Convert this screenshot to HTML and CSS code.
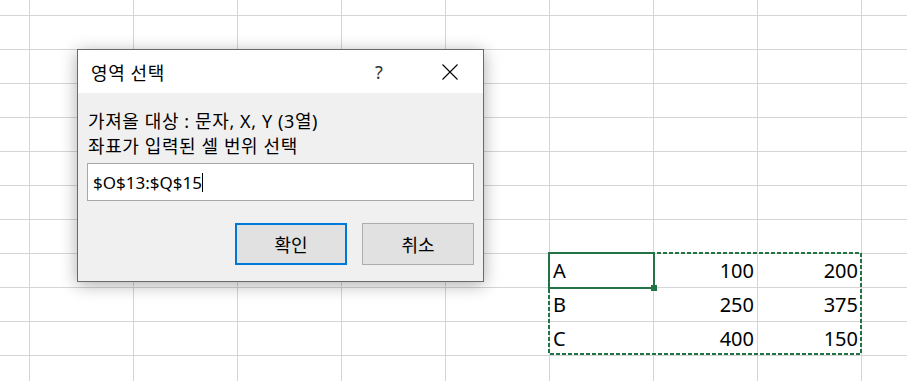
FILE: index.html
```html
<!DOCTYPE html>
<html lang="ko">
<head>
    <meta charset="UTF-8">
    <title>영역 선택</title>
    <link rel="stylesheet" href="styles.css">
</head>
<body>
    <div class="sheet">
        <div class="data">
            <div class="cell">A</div>
            <div class="cell num">100</div>
            <div class="cell num">200</div>
            <div class="cell">B</div>
            <div class="cell num">250</div>
            <div class="cell num">375</div>
            <div class="cell">C</div>
            <div class="cell num">400</div>
            <div class="cell num">150</div>

            <svg class="marquee" width="314" height="103" viewBox="0 0 314 103">
                <rect x="1" y="1" width="312" height="101" fill="none" stroke="#217346" stroke-width="2" stroke-dasharray="4 2"/>
            </svg>
            <div class="active-cell"><span class="fill-handle"></span></div>
        </div>

        <div class="dialog">
            <div class="title-bar">
                <span class="title">영역 선택</span>
                <span class="help">?</span>
                <span class="close">
                    <svg width="16" height="16" viewBox="0 0 16 16">
                        <path d="M0.5 0.5 L15.5 15.5 M15.5 0.5 L0.5 15.5" stroke="#000" stroke-width="1.1" fill="none"/>
                    </svg>
                </span>
            </div>
            <div class="dialog-body">
                <div class="line">가져올 대상 : 문자, X, Y (3열)</div>
                <div class="line">좌표가 입력된 셀 번위 선택</div>
                <div class="range-input"><span>$O$13:$Q$15</span><span class="caret"></span></div>
                <div class="buttons">
                    <button class="btn default">확인</button>
                    <button class="btn">취소</button>
                </div>
            </div>
        </div>
    </div>
</body>
</html>
```

FILE: styles.css
```css
body {
    margin: 0;
    background: #fff;
    font-family: "Noto Sans", "Noto Sans CJK KR", sans-serif;
}

.sheet {
    position: relative;
    width: 907px;
    height: 381px;
    overflow: hidden;
    display: grid;
    grid-template-columns: 30px repeat(8, 104px) 1fr;
    grid-template-rows: 16px repeat(11, 34px);
    background-image:
        linear-gradient(to right, transparent 103px, #d5d5d5 103px),
        linear-gradient(to bottom, transparent 33px, #d5d5d5 33px);
    background-size: 104px 100%, 100% 34px;
    background-position: 30px 0, 0 16px;
}

/* 데이터 영역 O13:Q15 */
.data {
    grid-column: 7 / span 3;
    grid-row: 9 / span 3;
    position: relative;
    display: grid;
    grid-template-columns: repeat(3, 104px);
    grid-template-rows: repeat(3, 34px);
}
.cell {
    padding: 0 4px 0 3px;
    font-size: 20px;
    line-height: 33px;
    color: #000;
    white-space: nowrap;
}
.cell.num {
    text-align: right;
}

.marquee {
    position: absolute;
    left: -2px;
    top: -2px;
}
.active-cell {
    position: absolute;
    left: -2px;
    top: -2px;
    width: 107px;
    height: 37px;
    border: 2px solid #217346;
    box-sizing: border-box;
}
.fill-handle {
    position: absolute;
    right: -4px;
    bottom: -4px;
    width: 6px;
    height: 6px;
    background: #217346;
}

/* 대화상자 */
.dialog {
    position: absolute;
    left: 77px;
    top: 49px;
    width: 407px;
    height: 233px;
    box-sizing: border-box;
    border: 1px solid #6a6a6a;
    background: #f0f0f0;
    box-shadow: 0 3px 16px rgba(0, 0, 0, 0.32);
    display: flex;
    flex-direction: column;
}
.title-bar {
    height: 43px;
    background: #fff;
    display: flex;
    align-items: center;
    padding: 0 10px 0 13px;
    font-size: 18px;
    color: #000;
}
.title {
    flex: 1;
    letter-spacing: 0.6px;
}
.help {
    width: 30px;
    text-align: center;
    color: #333;
    margin-right: 33px;
}
.close {
    width: 46px;
    display: flex;
    justify-content: center;
}

.dialog-body {
    flex: 1;
    padding: 16px 9px 0 9px;
    font-size: 18px;
    color: #000;
}
.line {
    line-height: 25px;
    padding-left: 1px;
    letter-spacing: 0.6px;
}
.range-input {
    margin-top: 4px;
    height: 38px;
    box-sizing: border-box;
    border: 1px solid #a8a8a8;
    background: #fff;
    padding: 0 5px;
    display: flex;
    align-items: center;
    font-size: 17px;
}
.caret {
    display: inline-block;
    width: 1px;
    height: 19px;
    background: #000;
}
.buttons {
    margin-top: 22px;
    display: flex;
    justify-content: flex-end;
    gap: 15px;
}
.btn {
    width: 112px;
    height: 42px;
    background: #e1e1e1;
    border: 1px solid #adadad;
    font-family: inherit;
    font-size: 18px;
    color: #000;
    padding: 0;
}
.btn.default {
    border: 2px solid #0078d7;
}
```
